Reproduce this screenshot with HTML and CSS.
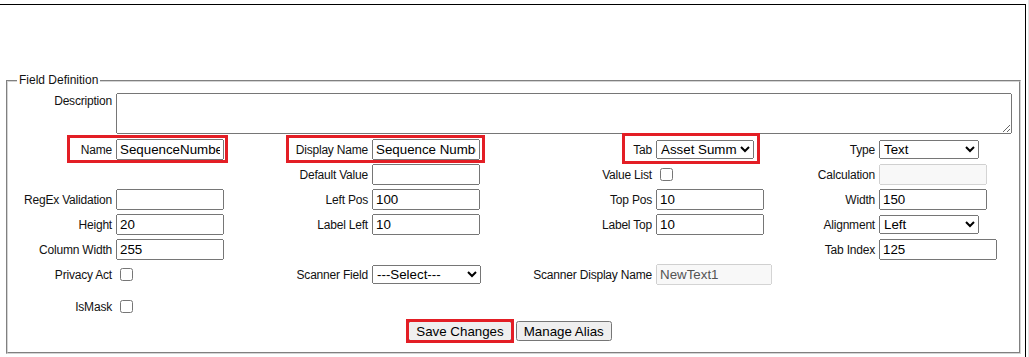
FILE: index.html
```html
<!DOCTYPE html>
<html>
<head>
<meta charset="utf-8">
<title>Field Definition</title>
<link rel="stylesheet" href="styles.css">
</head>
<body>
<div class="page">
  <div class="frame">
    <fieldset class="fd">
      <legend class="fd-legend">Field Definition</legend>
      <div class="grid">
        <label class="lbl lbl-top">Description</label>
        <textarea class="desc"></textarea>

        <label class="lbl hl hl-name">Name</label>
        <input class="txt" type="text" value="SequenceNumber">
        <label class="lbl hl hl-display">Display Name</label>
        <input class="txt" type="text" value="Sequence Number">
        <label class="lbl hl hl-tab">Tab</label>
        <select class="sel sel-tab"><option>Asset Summary</option></select>
        <label class="lbl">Type</label>
        <select class="sel sel-type"><option>Text</option></select>

        <span></span><span></span>
        <label class="lbl">Default Value</label>
        <input class="txt" type="text">
        <label class="lbl">Value List</label>
        <input class="chk" type="checkbox">
        <label class="lbl">Calculation</label>
        <input class="txt" type="text" disabled>

        <label class="lbl">RegEx Validation</label>
        <input class="txt" type="text">
        <label class="lbl">Left Pos</label>
        <input class="txt" type="text" value="100">
        <label class="lbl">Top Pos</label>
        <input class="txt" type="text" value="10">
        <label class="lbl">Width</label>
        <input class="txt" type="text" value="150">

        <label class="lbl">Height</label>
        <input class="txt" type="text" value="20">
        <label class="lbl">Label Left</label>
        <input class="txt" type="text" value="10">
        <label class="lbl">Label Top</label>
        <input class="txt" type="text" value="10">
        <label class="lbl">Alignment</label>
        <select class="sel sel-type"><option>Left</option></select>

        <label class="lbl">Column Width</label>
        <input class="txt" type="text" value="255">
        <span></span><span></span><span></span><span></span>
        <label class="lbl">Tab Index</label>
        <input class="txt txt-wide" type="text" value="125">

        <label class="lbl">Privacy Act</label>
        <input class="chk" type="checkbox">
        <label class="lbl">Scanner Field</label>
        <select class="sel sel-scan"><option>---Select---</option></select>
        <label class="lbl">Scanner Display Name</label>
        <input class="txt txt-scan" type="text" value="NewText1" disabled>

        <label class="lbl row-start low">IsMask</label>
        <input class="chk low" type="checkbox">

        <div class="actions">
          <button class="btn btn-save" type="button">Save Changes</button>
          <button class="btn" type="button">Manage Alias</button>
        </div>
      </div>
    </fieldset>
  </div>
</div>
</body>
</html>
```

FILE: styles.css
```css
html, body {
  margin: 0;
  padding: 0;
  background: #ffffff;
}

.page {
  width: 1029px;
  height: 357px;
  border-right: 1px solid #e4e4e4;
  box-sizing: border-box;
  overflow: hidden;
  font-family: "Liberation Sans", Arial, sans-serif;
  color: #000;
}

.frame {
  margin-top: 4px;
  width: 1026px;
  height: 353px;
  box-sizing: border-box;
  border-top: 1px solid #000;
  border-right: 1px solid #000;
  padding: 68px 0 0 6px;
}

.fd {
  margin: 0;
  width: 1015px;
  box-sizing: border-box;
  padding: 0 0 11px 0;
  border: 2px groove #d4d4d4;
}

.fd-legend {
  margin-left: 9px;
  padding: 0 2px;
  font-size: 12px;
  line-height: 15px;
  color: #111;
}

.grid {
  margin-top: 5px;
  display: grid;
  grid-template-columns: 108px 144px 112px 148px 136px 114px 109px 140px;
  grid-template-rows: 42px repeat(6, 21px) 28px 20px;
  row-gap: 4px;
}

.lbl {
  display: flex;
  align-items: center;
  justify-content: flex-end;
  padding-right: 4px;
  white-space: nowrap;
  font-size: 12px;
  line-height: 14px;
  letter-spacing: -0.2px;
  color: #111;
  position: relative;
}

.lbl-top {
  align-items: flex-start;
  padding-top: 1px;
}

.desc {
  grid-column: 2 / -1;
  width: 896px;
  height: 41px;
  margin: 0;
  box-sizing: border-box;
  align-self: start;
}

.txt {
  margin: 0;
  width: 108px;
  height: 21px;
  box-sizing: border-box;
  font-family: "Liberation Sans", Arial, sans-serif;
  font-size: 13.333px;
  justify-self: start;
  align-self: center;
}

.txt-wide {
  width: 118px;
}

.txt-scan {
  width: 116px;
}

.sel {
  margin: 0;
  height: 19px;
  font-family: "Liberation Sans", Arial, sans-serif;
  font-size: 13.333px;
  justify-self: start;
  align-self: center;
}

.sel-tab {
  width: 98px;
}

.sel-type {
  width: 100px;
}

.sel-scan {
  width: 109px;
}

.chk {
  margin: 3px 3px 3px 4px;
  justify-self: start;
  align-self: center;
}

.row-start {
  grid-column-start: 1;
}

.lbl.low {
  align-self: end;
  height: 21px;
}

.chk.low {
  align-self: end;
  margin-bottom: 4px;
}

.hl::after {
  content: "";
  position: absolute;
  box-sizing: border-box;
  border: 3px solid #e31e25;
  pointer-events: none;
}

.hl-name::after {
  left: 59px;
  top: -4px;
  width: 161px;
  height: 28px;
}

.hl-display::after {
  left: 26px;
  top: -4px;
  width: 199px;
  height: 28px;
}

.hl-tab::after {
  left: 102px;
  top: -6px;
  width: 138px;
  height: 31px;
}

.actions {
  grid-column: 1 / -1;
  display: flex;
  justify-content: center;
  gap: 4px;
  padding-right: 7px;
}

.btn {
  margin: 0;
  height: 20px;
  padding: 0 6px;
  font-family: "Liberation Sans", Arial, sans-serif;
  font-size: 13.333px;
}

.btn-save {
  outline: 3px solid #e31e25;
  outline-offset: -1px;
}
```
